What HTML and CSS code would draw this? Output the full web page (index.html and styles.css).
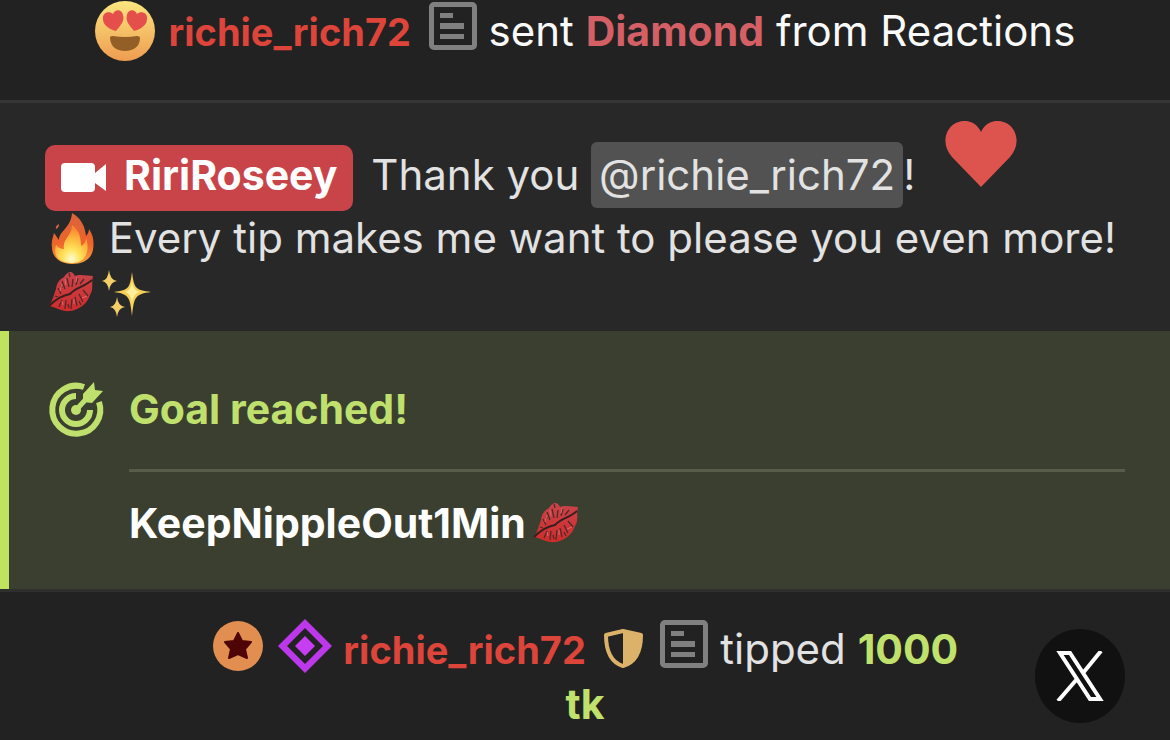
FILE: index.html
```html
<!DOCTYPE html>
<html lang="en">
<head>
  <meta charset="UTF-8" />
  <meta name="viewport" content="width=device-width, initial-scale=1.0"/>
  <title>Room chat</title>
  <link rel="stylesheet" href="styles.css">
</head>
<body>
  <!-- shared icons -->
  <svg class="defs" aria-hidden="true">
    <defs>
      <linearGradient id="lipFill" x1="0" y1="0" x2="0" y2="1">
        <stop offset="0" stop-color="#c9444a"/>
        <stop offset="1" stop-color="#cf2c2b"/>
      </linearGradient>
    </defs>
    <symbol id="note" viewBox="0 0 48 48">
      <path d="M5 0h38a5 5 0 0 1 5 5v38a5 5 0 0 1-5 5H5a5 5 0 0 1-5-5V5a5 5 0 0 1 5-5zM5 5v38h38V5z" fill="#808080" fill-rule="evenodd"/>
      <path d="M11 11h13v5H11zM11 21h24v6H11zM11 32h24v5H11z" fill="#808080"/>
    </symbol>
    <symbol id="lips" viewBox="1 0 52 52">
      <path d="M5 39C9 33 10 27 12 22C13 14 17 12 20 10C24 4 28 3 31 9C36 7 44 9 49 9C47 16 50 22 46 28C43 37 35 43 26 44C18 45 12 40 5 39z" fill="url(#lipFill)"/>
      <path d="M5 39C14 30 20 28 26 27C31 21 40 20 48 13" fill="none" stroke="#3a1f1f" stroke-width="2"/>
      <path d="M14 21l3 6M18 14l3 8M23 11l2 9M29 12l-1 8M34 11l-2 7M40 12l-4 5M15 40l3-7M21 42l1-9M27 42l1-10M33 39l-2-9M39 35l-4-8M44 29l-5-6M11 29l3 1M25 6l1 4M17 18l1 3M24 37l1 4M35 34l2 4" fill="none" stroke="#51292a" stroke-width="1.3"/>
      <path d="M16 24l2-7M22 18l-1-6M32 15l1-5M38 31l5-2M19 38l-1-4M30 37v-5" fill="none" stroke="#e0696b" stroke-width="1"/>
    </symbol>
  </svg>

  <main class="chat">
    <div class="notice notice-reaction">
      <svg class="face" viewBox="0 0 60 60" role="img" aria-label="heart eyes">
        <defs>
          <linearGradient id="faceFill" x1="0" y1="0" x2="0" y2="1">
            <stop offset="0" stop-color="#fbe67f"/>
            <stop offset="1" stop-color="#ee9c50"/>
          </linearGradient>
        </defs>
        <circle cx="30" cy="30" r="30" fill="url(#faceFill)"/>
        <path d="M21 30C14 28 8 24 8 18C7 12 14 9 18 13C20 8 27 8 28 14C30 20 25 25 21 30z" fill="#e54f4b"/>
        <path d="M39 30C46 28 52 24 52 18C53 12 46 9 42 13C40 8 33 8 32 14C30 20 35 25 39 30z" fill="#e54f4b"/>
        <path d="M15 36q1-1 3-1q12 2 24 0q3 0 3 2c0 8-6 13-15 13s-15-5-15-14z" fill="#935f27"/>
      </svg>
      <a class="user" href="#">richie_rich72</a>
      <svg class="note" role="img" aria-label="note"><use href="#note"/></svg>
      <span>sent <b class="gift">Diamond</b> from Reactions</span>
    </div>

    <div class="message">
      <a class="host" href="#"><svg class="camera" viewBox="0 0 45 29" aria-hidden="true"><path d="M4 0h26a4 4 0 0 1 4 4v6l11-9v27l-11-8v5a4 4 0 0 1-4 4H4a4 4 0 0 1-4-4V4a4 4 0 0 1 4-4z" fill="#fff"/></svg>RiriRoseey</a>
      <span class="thanks">Thank you</span>
      <a class="mention" href="#">@richie_rich72</a>!
      <svg class="heart" viewBox="0 0 72 66" role="img" aria-label="heart"><path d="M36 66L7 36C-3 25-1 10 9 3C19-3 31 0 36 11C41 0 53-3 63 3C73 10 75 25 65 36z" fill="#dd544e"/></svg>
      <br>
      <svg class="emoji" viewBox="0 0 52 52" role="img" aria-label="fire">
        <defs>
          <linearGradient id="fireOuter" x1="0" y1="0" x2="0" y2="1">
            <stop offset="0" stop-color="#d9633b"/>
            <stop offset="0.6" stop-color="#ee642b"/>
            <stop offset="1" stop-color="#f5a43c"/>
          </linearGradient>
          <radialGradient id="fireInner" cx="0.5" cy="0.9" r="0.8">
            <stop offset="0" stop-color="#fffbd0"/>
            <stop offset="0.35" stop-color="#ffe25a"/>
            <stop offset="0.7" stop-color="#fdb53e"/>
            <stop offset="1" stop-color="#f98a32"/>
          </radialGradient>
        </defs>
        <path d="M27 0C37 6 40 14 41 23C43 21 44 18 44 16C49 23 49 30 48 37C46 47 37 51 27 51C16 51 7 45 7 34C6 29 8 24 9 20C11 22 12 25 14 27C14 18 26 15 27 0z" fill="url(#fireOuter)"/>
        <path d="M11 16q3-1 3-5q-4 2-3 5z" fill="#d9633b"/>
        <path d="M27 12C34 17 36 24 36 33C40 31 41 28 41 25C45 36 42 50 27 50C13 50 8 42 11 32C14 35 16 36 19 36C17 26 27 23 27 12z" fill="url(#fireInner)"/>
      </svg>
      Every tip makes me want to please you even more!
      <br>
      <svg class="emoji" role="img" aria-label="kiss"><use href="#lips"/></svg><svg class="emoji" viewBox="0 0 52 52" role="img" aria-label="sparkles">
        <path d="M35 5C37 21 38 23 54 25C38 27 37 30 35 49C33 30 32 27 17 25C32 23 33 21 35 5z" fill="#f6cf58"/>
        <path d="M35 15q1 9 8 10q-7 1-8 11q-1-10-7-11q6-1 7-10z" fill="#fff0a0"/>
        <path d="M12 3q1 10 8 11q-7 1-8 10q-1-9-7-10q6-1 7-11zM20 30q1 9 8 10q-7 1-8 10q-1-9-7-10q6-1 7-10z" fill="#f3cf68"/>
      </svg>
    </div>

    <section class="goal">
      <svg class="target" viewBox="0 0 55 55" aria-hidden="true">
        <g fill="none" stroke="#bfe06c" stroke-width="6">
          <path d="M36 5A24 24 0 1 0 51 20"/>
          <path d="M28 14A14 14 0 1 0 42 28"/>
        </g>
        <circle cx="28" cy="28" r="5" fill="#bfe06c"/>
        <path d="M28 28L40 15" stroke="#bfe06c" stroke-width="5"/>
        <path d="M35 12L46 0l1 8 8 1-11 12-9-1z" fill="#bfe06c"/>
      </svg>
      <div class="goal-body">
        <h2 class="goal-title">Goal reached!</h2>
        <p class="goal-text">KeepNippleOut1Min<svg class="emoji goal-kiss" role="img" aria-label="kiss"><use href="#lips"/></svg></p>
      </div>
    </section>

    <div class="notice notice-tip">
      <svg class="star" viewBox="0 0 52 52" role="img" aria-label="star">
        <circle cx="26" cy="26" r="25" fill="#e18e50"/>
        <path d="M26 13l4 8 9 1-6 7 2 9-9-4-9 4 2-9-6-7 9-1z" fill="#4f0506" stroke="#4f0506" stroke-width="2" stroke-linejoin="round"/>
      </svg>
      <svg class="diamond" viewBox="0 0 54 54" role="img" aria-label="diamond">
        <path d="M27 0l27 27-27 27L0 27zM27 9L9 27l18 18 18-18z" fill="#bd38ea" fill-rule="evenodd"/>
        <path d="M27 17l10 10-10 10-10-10z" fill="#c63df2"/>
      </svg>
      <a class="user" href="#">richie_rich72</a>
      <svg class="shield" viewBox="0 0 39 39" role="img" aria-label="shield">
        <path d="M19 2L37 6C37 21 33 33 19 37C6 33 2 21 2 6z" fill="none" stroke="#dcb16a" stroke-width="4" stroke-linejoin="round"/>
        <path d="M19 2l18 4c0 15-4 27-18 31z" fill="#dcb16a"/>
      </svg>
      <svg class="note" role="img" aria-label="note"><use href="#note"/></svg>
      tipped <b class="amount">1000<br>tk</b>
    </div>
  </main>

  <button class="share" type="button" aria-label="X">
    <svg class="x-logo" viewBox="0 0 48 50" aria-hidden="true">
      <path d="M4 2H14L44 48H34zM45 0L27 22M21 28L2 50" fill="none" stroke="#fff" stroke-width="4"/>
    </svg>
  </button>
</body>
</html>
```
FILE: styles.css
```css
* {
  box-sizing: border-box;
}

body {
  margin: 0;
  min-height: 100vh;
  background: #222222;
  color: #e2e2e2;
  font-family: Inter, "Liberation Sans", sans-serif;
  font-size: 42px;
  line-height: 54px;
}

a {
  text-decoration: none;
}

.defs {
  position: absolute;
  width: 0;
  height: 0;
}

.chat {
  display: flex;
  flex-direction: column;
}

/* centered system lines */
.notice {
  text-align: center;
}

.notice-reaction {
  padding: 1px 24px 39px;
  border-bottom: 3px solid #363636;
  color: #fafafa;
}

.notice-tip {
  padding: 27px 24px 8px;
}

.user {
  color: #dd443a;
  font-size: 38px;
  font-weight: 700;
}

.gift {
  color: #d45f64;
  font-size: 41px;
  font-weight: 700;
}

.amount {
  color: #c0e26c;
  font-size: 41px;
  font-weight: 700;
}

.face {
  width: 60px;
  height: 60px;
  margin-right: 2px;
  vertical-align: -15px;
}

.note {
  width: 48px;
  height: 48px;
  margin-left: 6px;
  vertical-align: -4px;
}

.star {
  width: 52px;
  height: 52px;
  margin-right: 2px;
  vertical-align: -8px;
}

.diamond {
  width: 54px;
  height: 54px;
  vertical-align: -9px;
}

.shield {
  width: 39px;
  height: 39px;
  margin-left: 6px;
  vertical-align: -4px;
}

/* host message */
.message {
  padding: 18px 45px 12px;
  background: #282828;
}

.host {
  display: inline-block;
  padding: 3px 16px 9px;
  border-radius: 10px;
  background: #c94449;
  color: #fff;
  font-size: 41px;
  font-weight: 700;
}

.camera {
  width: 45px;
  height: 29px;
  margin-right: 18px;
  vertical-align: -2px;
}

.thanks {
  margin-left: 6px;
}

.mention {
  display: inline-block;
  padding: 6px 8px;
  border-radius: 6px;
  background: #525252;
  color: #e2e2e2;
}

.heart {
  width: 72px;
  height: 66px;
  margin-left: 18px;
  vertical-align: 3px;
}

.emoji {
  width: 52px;
  height: 52px;
  overflow: visible;
  vertical-align: -12px;
}

/* goal card */
.goal {
  display: flex;
  gap: 26px;
  margin-bottom: 3px;
  padding: 51px 45px 39px 39px;
  border-left: 9px solid #bfe35f;
  background: #3b3f30;
  box-shadow: 0 3px 0 #2f302e;
}

.target {
  flex: none;
  width: 55px;
  height: 55px;
  overflow: visible;
}

.goal-body {
  flex: 1;
}

.goal-title {
  margin: 0;
  padding-bottom: 33px;
  color: #c0e06e;
  font-size: 41px;
  font-weight: 700;
}

.goal-text {
  margin: 0;
  padding-top: 24px;
  border-top: 3px solid #585c4b;
  color: #fff;
  font-size: 41px;
  font-weight: 700;
}

.goal-kiss {
  margin-left: 4px;
}

/* floating share button */
.share {
  position: fixed;
  right: 45px;
  bottom: 17px;
  display: flex;
  align-items: center;
  justify-content: center;
  width: 90px;
  height: 94px;
  padding: 0;
  border: none;
  border-radius: 50%;
  background: #111111;
  cursor: pointer;
}

.x-logo {
  width: 48px;
  height: 50px;
}
```
